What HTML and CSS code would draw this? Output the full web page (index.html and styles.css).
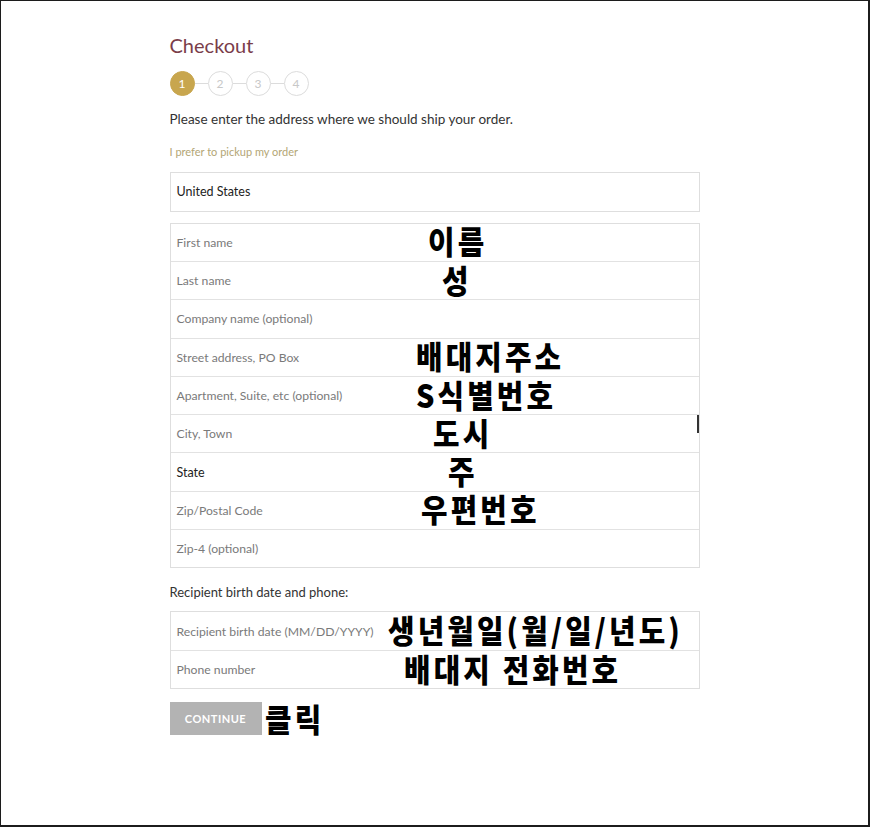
FILE: index.html
```html
<!DOCTYPE html>
<html lang="en">
<head>
  <meta charset="UTF-8" />
  <title>Checkout</title>
  <link rel="stylesheet" href="styles.css">
</head>
<body>
  <div class="frame">
    <div class="checkout">
      <h1>Checkout</h1>
      <div class="steps">
        <span class="step active">1</span><span class="line"></span>
        <span class="step">2</span><span class="line"></span>
        <span class="step">3</span><span class="line"></span>
        <span class="step">4</span>
      </div>
      <p class="intro">Please enter the address where we should ship your order.</p>
      <a class="pickup" href="#">I prefer to pickup my order</a>

      <div class="box">
        <div class="row dark">United States</div>
      </div>

      <div class="box group">
        <div class="row">First name<span class="note" style="left:257px">이름</span></div>
        <div class="row">Last name<span class="note" style="left:271px">성</span></div>
        <div class="row">Company name (optional)</div>
        <div class="row">Street address, PO Box<span class="note" style="left:245px">배대지주소</span></div>
        <div class="row">Apartment, Suite, etc (optional)<span class="note" style="left:245px">S식별번호</span></div>
        <div class="row">City, Town<span class="note" style="left:262px">도시</span><span class="cursor"></span></div>
        <div class="row dark">State<span class="note" style="left:277px">주</span></div>
        <div class="row">Zip/Postal Code<span class="note" style="left:250px">우편번호</span></div>
        <div class="row">Zip-4 (optional)</div>
      </div>

      <p class="sub">Recipient birth date and phone:</p>

      <div class="box group">
        <div class="row">Recipient birth date (MM/DD/YYYY)<span class="note" style="left:217px">생년월일(월/일/년도)</span></div>
        <div class="row">Phone number<span class="note" style="left:233px">배대지 전화번호</span></div>
      </div>

      <div class="actions">
        <button type="button">CONTINUE</button>
        <span class="click">클릭</span>
      </div>
    </div>
  </div>
</body>
</html>
```

FILE: styles.css
```css
* { box-sizing: border-box; }
body { margin: 0; background: #fff; font-family: Lato, "Liberation Sans", sans-serif; color: #333; }
.frame { height: 827px; border: 1px solid #1c1c1c; border-width: 1px 2px 2px 1px; }
.checkout { width: 530px; margin: 0 auto; padding-top: 32px; }
h1 { margin: 0; font-size: 20px; font-weight: 400; color: #7a3d4a; line-height: 24px; }
.steps { display: flex; align-items: center; margin-top: 14px; }
.step { width: 25px; height: 25px; border-radius: 50%; border: 1.5px solid #dcdcdc; color: #c8c8c8; font-size: 12px; display: flex; align-items: center; justify-content: center; }
.step.active { background: #c8a64e; border-color: #c8a64e; color: #fff; }
.line { width: 13px; height: 1.5px; background: #dcdcdc; }
.intro { margin: 14px 0 0; font-size: 13.5px; line-height: 18px; color: #333; }
.pickup { display: block; margin-top: 17px; font-size: 11px; color: #b3a675; text-decoration: none; line-height: 14px; }
.box { border: 1px solid #dedede; margin-top: 13px; }
.box.group { margin-top: 11px; }
.row { position: relative; height: 38.3px; display: flex; align-items: center; padding-left: 6px; font-size: 12.2px; color: #7a7a7a; border-top: 1px solid #e2e2e2; }
.row:first-child { border-top: none; height: 37.5px; }
.row.dark { color: #222; font-size: 12.5px; }
.note { position: absolute; top: calc(50% - 2px); transform: translateY(-50%) scaleX(0.9); transform-origin: left center; font-family: "Noto Sans CJK KR", sans-serif; font-weight: 900; font-size: 32px; line-height: 1; letter-spacing: 3.5px; color: #000; white-space: nowrap; }
.cursor { position: absolute; right: 0; top: 0; width: 2px; height: 18px; background: #333; }
.sub { margin: 16px 0 0; font-size: 13px; color: #333; line-height: 16px; }
.actions { display: flex; align-items: center; margin-top: 13px; }
button { width: 92px; height: 33px; border: none; background: #b3b3b3; color: #fff; font-family: inherit; font-weight: 700; font-size: 11px; letter-spacing: 0.5px; padding: 0; }
.click { font-family: "Noto Sans CJK KR", sans-serif; font-weight: 900; font-size: 32px; color: #000; margin-left: 3px; margin-top: -2px; letter-spacing: 3.5px; transform: scaleX(0.9); transform-origin: left center; line-height: 1; }
```
